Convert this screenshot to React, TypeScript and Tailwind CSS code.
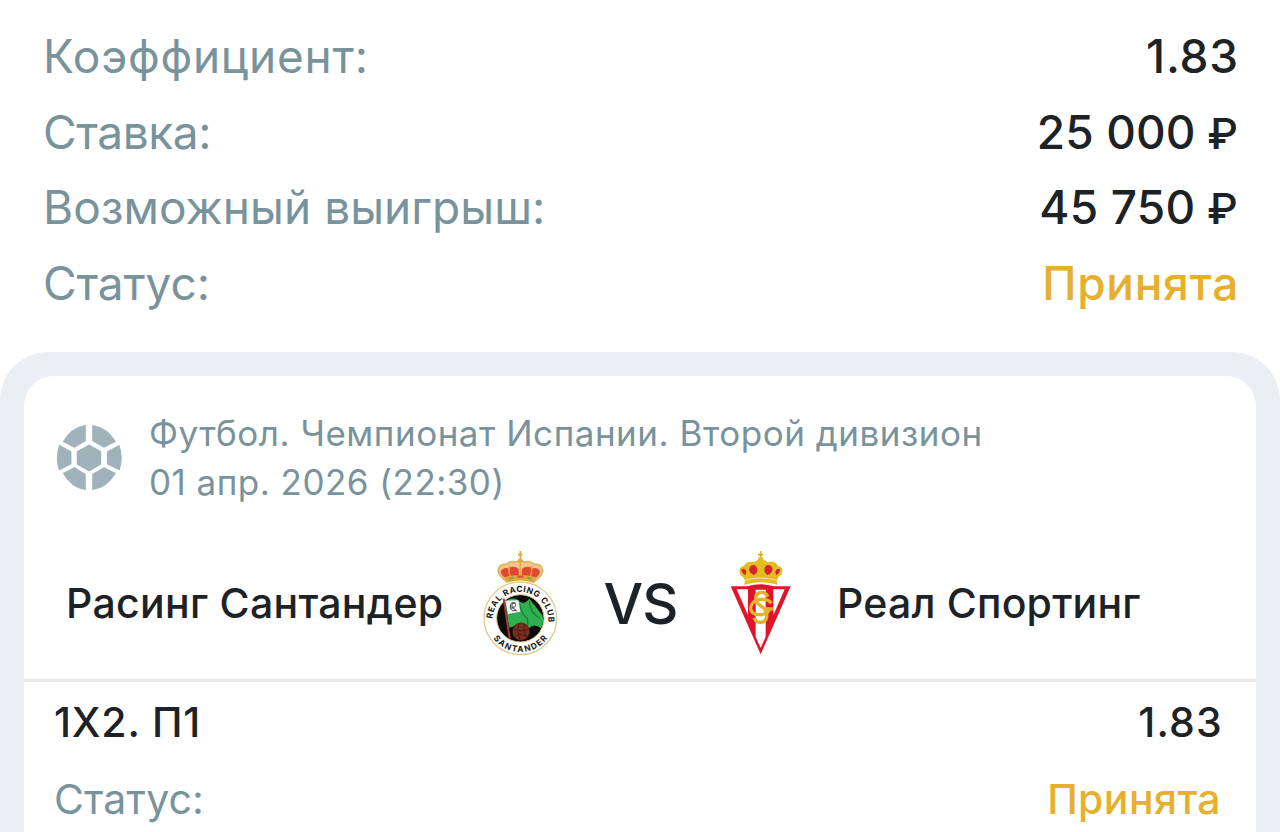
import React from 'react';

interface SummaryRow {
  label: string;
  value: string;
  currency?: string;
  labelClass: string;
  valueClass: string;
}

const summary: SummaryRow[] = [
  { label: 'Коэффициент:', value: '1.83', labelClass: 'tracking-[0.75px]', valueClass: '-mr-px tracking-[0.8px]' },
  { label: 'Ставка:', value: '25 000', currency: '₽', labelClass: 'tracking-[-0.4px]', valueClass: 'tracking-[0.1px]' },
  { label: 'Возможный выигрыш:', value: '45 750', currency: '₽', labelClass: 'tracking-[0.03px]', valueClass: 'tracking-[0.2px]' },
  { label: 'Статус:', value: 'Принята', labelClass: 'tracking-[-0.1px]', valueClass: '-mr-px tracking-[0.7px] text-[#e6b02e]' },
];

const BallIcon = () => (
  <svg className="w-[67px] h-[67px] shrink-0" viewBox="50 42 198 200" fill="#a0b3ba">
    <path d="M138 44V93L104 113L69 95Q91 53 138 44Z" />
    <path d="M157 44V93L192 113L228 95Q205 53 157 44Z" />
    <path d="M138 240V191L104 171L69 188Q91 231 138 240Z" />
    <path d="M157 240V191L192 171L228 188Q205 231 157 240Z" />
    <path d="M59 104L95 124V162L58 181Q44 142 59 104Z" />
    <path d="M238 104L201 124V162L239 181Q252 142 238 104Z" />
    <path d="M148 103L184 123V163L148 184L111 163V123Z" />
  </svg>
);

const RacingCrest = () => (
  <svg className="w-[100px] h-[125px] shrink-0" viewBox="0 0 300 375">
    <defs>
      <path id="racing-top" d="M67 240A84 84 0 1 1 235 240" />
      <path id="racing-bottom" d="M50 235A101 101 0 0 0 252 235" />
      <clipPath id="racing-field">
        <circle cx="151" cy="235" r="69" />
      </clipPath>
    </defs>
    <path d="M109 124Q86 108 84 92Q86 72 109 72Q122 61 138 66Q151 56 164 66Q180 61 193 72Q216 72 219 92Q216 108 194 124Q151 110 109 124Z" fill="#efc588" stroke="#dcae65" strokeWidth="4" />
    <g fill="#e2472f">
      <path d="M92 93Q103 78 117 87L119 110L106 115Q92 105 92 93Z" />
      <path d="M120 82Q134 76 146 87L147 107L123 111Q114 95 120 82Z" />
      <path d="M182 82Q168 76 156 87L155 107L179 111Q188 95 182 82Z" />
      <path d="M210 93Q199 78 185 87L183 110L196 115Q210 105 210 93Z" />
    </g>
    <path d="M151 68V106M119 78Q114 92 121 110M183 78Q188 92 181 110" fill="none" stroke="#e3a73c" strokeWidth="4" />
    <path d="M151 33V60M144 44H158" stroke="#dfa83f" strokeWidth="5" />
    <circle cx="151" cy="62" r="7" fill="#e2a93f" />
    <path d="M103 112Q151 98 199 112L193 129Q151 114 109 129Z" fill="#e0a63b" />
    <path d="M117 117L130 113M172 113L185 117" stroke="#7da84c" strokeWidth="7" />
    <path d="M142 110H160" stroke="#d8552f" strokeWidth="7" />
    <circle cx="151" cy="235" r="109" fill="#fff" stroke="#dccb92" strokeWidth="4" />
    <circle cx="151" cy="235" r="71" fill="#0b0b0b" stroke="#d6c07c" strokeWidth="3" />
    <g clipPath="url(#racing-field)">
      <path d="M104 184Q133 166 151 186Q164 194 178 176L217 226Q227 255 213 265Q191 248 176 266Q151 250 118 263Z" fill="#30ae50" />
      <path d="M150 192Q151 216 172 237Q176 250 170 264M178 182Q180 219 209 234" fill="none" stroke="#148237" strokeWidth="4" />
    </g>
    <path d="M106 182L145 181L151 215L114 222Z" fill="#f5f5f5" />
    <path d="M137 189Q120 184 121 201Q122 216 139 211M126 207V191Q138 187 137 197Q136 203 127 202L140 213" fill="none" stroke="#444" strokeWidth="3" />
    <circle cx="153" cy="275" r="26" fill="#7b2f20" stroke="#3a120b" strokeWidth="2" />
    <path d="M131 267Q153 278 175 267M136 287Q153 279 171 289M147 252L143 272L149 298M163 253L162 272L168 292" fill="none" stroke="#4a1a10" strokeWidth="2.5" />
    <path d="M101 176L119 296" stroke="#a53a32" strokeWidth="6" />
    <g fill="#151515" fontFamily="Inter, sans-serif" fontWeight="700" fontSize="25">
      <text textLength="266" lengthAdjust="spacing">
        <textPath href="#racing-top" startOffset="4">REAL RACING CLUB</textPath>
      </text>
      <text textLength="188" lengthAdjust="spacing">
        <textPath href="#racing-bottom" startOffset="65">SANTANDER</textPath>
      </text>
    </g>
  </svg>
);

const SportingCrest = () => (
  <svg className="w-[100px] h-[125px] shrink-0" viewBox="0 0 300 375">
    <path d="M62 139H112Q152 126 192 139H242L152 343Z" fill="#e1142d" />
    <g fill="#fff">
      <path d="M80 148H114V226Z" />
      <path d="M137 149H167V290L152 324L137 290Z" />
      <path d="M190 148H224L190 226Z" />
    </g>
    <path d="M105 123Q102 111 91 104Q82 83 102 77Q111 61 132 67Q145 57 148 60H158Q161 57 174 67Q195 61 204 77Q223 83 214 104Q202 111 200 123L203 134Q152 119 102 134Z" fill="#e5bb22" />
    <path d="M152 33V58M144 44H160" stroke="#d9b020" strokeWidth="5" />
    <circle cx="152" cy="58" r="8" fill="#e5bb22" />
    <g fill="#d3252b">
      <path d="M121 79Q135 70 141 83Q145 98 132 105Q119 101 117 88Z" />
      <path d="M184 79Q170 70 164 83Q160 98 173 105Q186 101 188 88Z" />
      <path d="M94 88Q104 82 109 94L107 106Q96 101 94 88Z" />
      <path d="M210 88Q201 82 196 94L198 106Q209 101 210 88Z" />
    </g>
    <path d="M105 121Q152 107 199 121" fill="none" stroke="#f6e3a0" strokeWidth="3" />
    <g fill="none" stroke="#e3b42b" strokeWidth="10">
      <path d="M174 170Q165 154 149 158Q134 163 138 180Q141 191 157 201Q172 212 170 231Q167 249 148 247Q136 245 132 233" />
      <path d="M184 190Q175 176 150 178Q124 182 122 205Q123 224 149 224Q174 224 179 206M164 207H188" />
    </g>
  </svg>
);

const App: React.FC = () => {
  return (
    <div className="h-[832px] overflow-hidden bg-white font-['Inter',sans-serif] text-[#1d2226]">
      <div className="h-[352px] pt-[19px] pl-[43px] pr-[42px]">
        {summary.map((row) => (
          <div key={row.label} className="flex h-[75.5px] items-center justify-between text-[46px] leading-[75px]">
            <span className={`text-[#78939c] ${row.labelClass}`}>{row.label}</span>
            <span className={`font-medium ${row.valueClass}`}>
              {row.value}
              {row.currency && <span className="text-[43px] leading-none"> {row.currency}</span>}
            </span>
          </div>
        ))}
      </div>

      <div className="h-[520px] rounded-t-[48px] bg-[#ebeff4] px-6 pt-6">
        <div className="h-full rounded-t-[30px] bg-white">
          <div className="flex h-[152px] items-start pl-8 pt-[33px]">
            <div className="mt-[15px]">
              <BallIcon />
            </div>
            <div className="ml-[26px] text-[35px] leading-[49px] text-[#78939c]">
              <div className="tracking-[0.52px]">Футбол. Чемпионат Испании. Второй дивизион</div>
              <div className="tracking-[0.48px]">01 апр. 2026 (22:30)</div>
            </div>
          </div>

          <div className="flex h-[154px] items-center border-b-[3px] border-[#e7e8ea] pb-[3px] text-[41px] font-medium">
            <div className="w-[446px] pt-1 pl-[42px] whitespace-nowrap tracking-[0.3px]">Расинг Сантандер</div>
            <RacingCrest />
            <div className="w-[140px] pt-1 pl-px text-center text-[56px] tracking-[-1px]">VS</div>
            <SportingCrest />
            <div className="ml-[27px] pt-1 whitespace-nowrap tracking-[0.2px]">Реал Спортинг</div>
          </div>

          <div className="flex h-[78px] items-center justify-between pt-[3px] pl-[30px] pr-[33px] text-[41px] font-medium">
            <span className="tracking-[0.8px]">1X2. П1</span>
            <span className="tracking-[1.2px]">1.83</span>
          </div>
          <div className="flex h-[78px] items-center justify-between pt-0.5 pl-[30px] pr-[35px] text-[41px]">
            <span className="tracking-[0.1px] text-[#78939c]">Статус:</span>
            <span className="font-medium tracking-[0.4px] text-[#e6b02e]">Принята</span>
          </div>
        </div>
      </div>
    </div>
  );
};

export default App;
